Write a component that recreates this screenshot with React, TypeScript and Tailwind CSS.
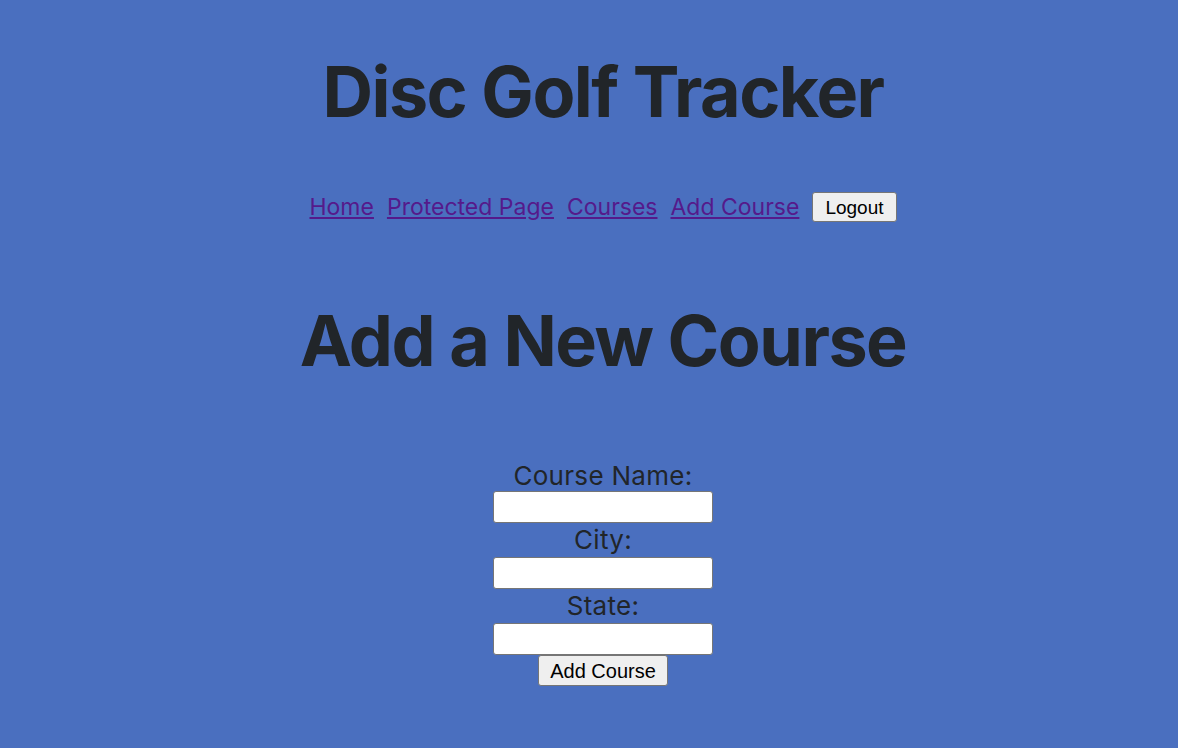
import React from 'react';

const App: React.FC = () => {
  return (
    <div className="min-h-screen w-full bg-[#4a6fbf] pl-[28px] text-[#212529] text-center font-['Inter',sans-serif]">
      <h1 className="pt-[42px] text-[70px] leading-[100px] font-bold tracking-[-1.5px]">Disc Golf Tracker</h1>

      {/* Nav */}
      <nav className="mt-[50px] flex items-center justify-center gap-[13px] text-[23px] leading-[30px]">
        <a href="#" className="text-[#551a8b] underline">Home</a>
        <a href="#" className="text-[#551a8b] underline">Protected Page</a>
        <a href="#" className="text-[#551a8b] underline">Courses</a>
        <a href="#" className="text-[#551a8b] underline">Add Course</a>
        <button className="h-[30px] px-[12px] bg-[#efefef] border border-[#767676] rounded-[3px] text-black text-[19px] font-['Liberation_Sans',Arial,sans-serif]">
          Logout
        </button>
      </nav>

      <h2 className="mt-[69px] text-[70px] leading-[100px] font-bold tracking-[-1.5px]">Add a New Course</h2>

      {/* Form */}
      <form className="mt-[70px] flex flex-col items-center">
        <label className="text-[26px] leading-[30px] tracking-[0.3px]">Course Name:</label>
        <input type="text" className="w-[220px] h-[32px] bg-white border border-[#767676] rounded-[3px]" />
        <label className="text-[26px] leading-[34px] tracking-[0.3px]">City:</label>
        <input type="text" className="w-[220px] h-[32px] bg-white border border-[#767676] rounded-[3px]" />
        <label className="text-[26px] leading-[34px] tracking-[0.3px]">State:</label>
        <input type="text" className="w-[220px] h-[32px] bg-white border border-[#767676] rounded-[3px]" />
        <button type="submit" className="h-[31px] px-[11px] bg-[#efefef] border border-[#767676] rounded-[3px] text-black text-[20px] font-['Liberation_Sans',Arial,sans-serif]">
          Add Course
        </button>
      </form>
    </div>
  );
};

export default App;
